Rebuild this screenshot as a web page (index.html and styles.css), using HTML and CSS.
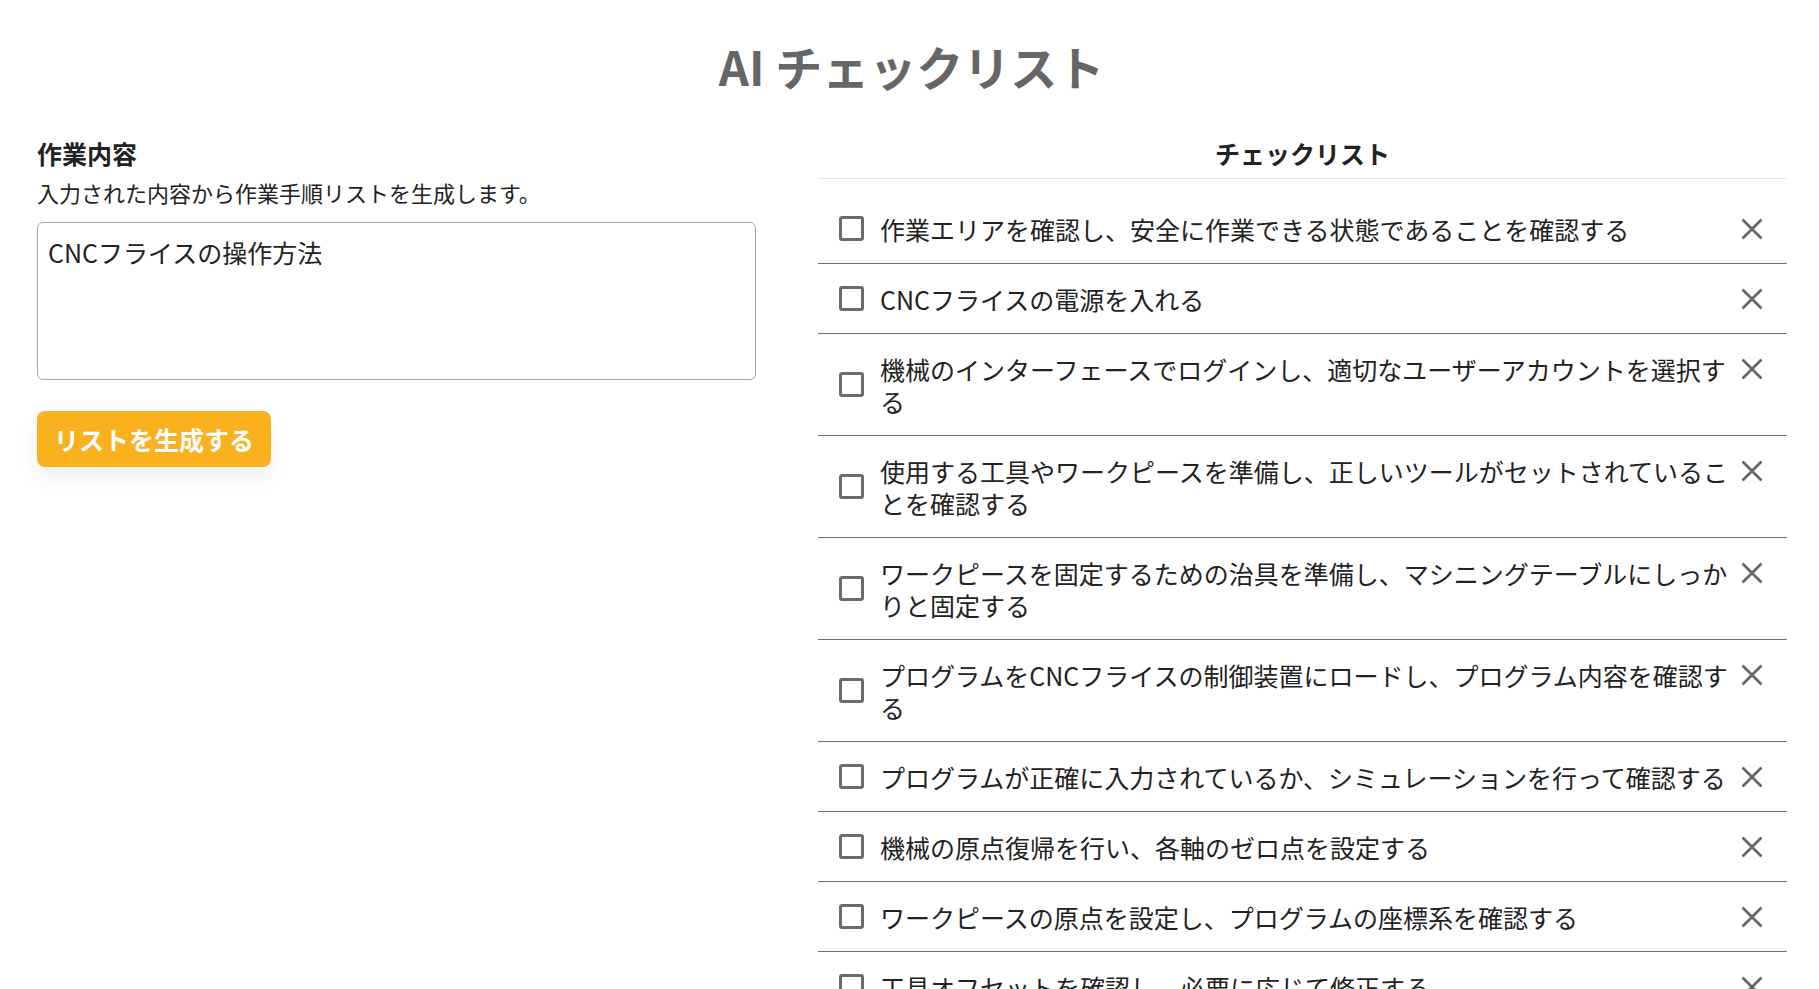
FILE: index.html
```html
<!DOCTYPE html>
<html lang="ja">
<head>
<meta charset="utf-8">
<title>AI チェックリスト</title>
<link rel="stylesheet" href="styles.css">
</head>
<body>
<h1 class="title">AI チェックリスト</h1>
<main class="layout">
  <section class="input-panel">
    <h2 class="panel-heading">作業内容</h2>
    <p class="panel-desc">入力された内容から作業手順リストを生成します。</p>
    <textarea class="task-input">CNCフライスの操作方法</textarea>
    <button class="generate-btn" type="button">リストを生成する</button>
  </section>
  <section class="list-panel">
    <h2 class="list-heading">チェックリスト</h2>
    <ul class="checklist">
      <li class="item"><span class="box"></span><span class="item-text">作業エリアを確認し、安全に作業できる状態であることを確認する</span><span class="remove"><svg viewBox="0 0 22 22" width="22" height="22"><path d="M1.5 1.5 L20.5 20.5 M20.5 1.5 L1.5 20.5"/></svg></span></li>
      <li class="item"><span class="box"></span><span class="item-text">CNCフライスの電源を入れる</span><span class="remove"><svg viewBox="0 0 22 22" width="22" height="22"><path d="M1.5 1.5 L20.5 20.5 M20.5 1.5 L1.5 20.5"/></svg></span></li>
      <li class="item"><span class="box"></span><span class="item-text">機械のインターフェースでログインし、適切なユーザーアカウントを選択する</span><span class="remove"><svg viewBox="0 0 22 22" width="22" height="22"><path d="M1.5 1.5 L20.5 20.5 M20.5 1.5 L1.5 20.5"/></svg></span></li>
      <li class="item"><span class="box"></span><span class="item-text">使用する工具やワークピースを準備し、正しいツールがセットされていることを確認する</span><span class="remove"><svg viewBox="0 0 22 22" width="22" height="22"><path d="M1.5 1.5 L20.5 20.5 M20.5 1.5 L1.5 20.5"/></svg></span></li>
      <li class="item"><span class="box"></span><span class="item-text">ワークピースを固定するための治具を準備し、マシニングテーブルにしっかりと固定する</span><span class="remove"><svg viewBox="0 0 22 22" width="22" height="22"><path d="M1.5 1.5 L20.5 20.5 M20.5 1.5 L1.5 20.5"/></svg></span></li>
      <li class="item"><span class="box"></span><span class="item-text">プログラムをCNCフライスの制御装置にロードし、プログラム内容を確認する</span><span class="remove"><svg viewBox="0 0 22 22" width="22" height="22"><path d="M1.5 1.5 L20.5 20.5 M20.5 1.5 L1.5 20.5"/></svg></span></li>
      <li class="item"><span class="box"></span><span class="item-text">プログラムが正確に入力されているか、シミュレーションを行って確認する</span><span class="remove"><svg viewBox="0 0 22 22" width="22" height="22"><path d="M1.5 1.5 L20.5 20.5 M20.5 1.5 L1.5 20.5"/></svg></span></li>
      <li class="item"><span class="box"></span><span class="item-text">機械の原点復帰を行い、各軸のゼロ点を設定する</span><span class="remove"><svg viewBox="0 0 22 22" width="22" height="22"><path d="M1.5 1.5 L20.5 20.5 M20.5 1.5 L1.5 20.5"/></svg></span></li>
      <li class="item"><span class="box"></span><span class="item-text">ワークピースの原点を設定し、プログラムの座標系を確認する</span><span class="remove"><svg viewBox="0 0 22 22" width="22" height="22"><path d="M1.5 1.5 L20.5 20.5 M20.5 1.5 L1.5 20.5"/></svg></span></li>
      <li class="item"><span class="box"></span><span class="item-text">工具オフセットを確認し、必要に応じて修正する</span><span class="remove"><svg viewBox="0 0 22 22" width="22" height="22"><path d="M1.5 1.5 L20.5 20.5 M20.5 1.5 L1.5 20.5"/></svg></span></li>
    </ul>
  </section>
</main>
</body>
</html>
```
FILE: styles.css
```css
* { box-sizing: border-box; }

html, body {
  margin: 0;
  padding: 0;
  background: #ffffff;
}

body {
  font-family: "Noto Sans CJK JP", "Noto Sans", sans-serif;
  color: #222222;
}

.title {
  margin: 38px 0 0;
  padding-left: 4px;
  text-align: center;
  font-size: 47px;
  line-height: 55px;
  font-weight: 700;
  color: #666666;
}

.layout {
  display: grid;
  grid-template-columns: 719px 1fr;
  column-gap: 62px;
  padding: 0 32px 0 37px;
  margin-top: 44px;
}

.panel-heading {
  margin: 0;
  font-size: 25px;
  line-height: 33px;
  font-weight: 700;
  color: #222222;
}

.panel-desc {
  margin: 7px 0 0;
  font-size: 22px;
  line-height: 30px;
  color: #222222;
}

.task-input {
  display: block;
  width: 100%;
  height: 158px;
  margin-top: 15px;
  padding: 13px 10px;
  border: 1px solid #a6a6a6;
  border-radius: 6px;
  font-family: inherit;
  font-size: 25px;
  line-height: 33px;
  color: #222222;
  resize: none;
  outline: none;
}

.generate-btn {
  display: block;
  margin-top: 31px;
  height: 56px;
  padding: 0 17px;
  border: none;
  border-radius: 8px;
  background: #f9b11e;
  color: #ffffff;
  font-family: inherit;
  font-size: 25px;
  line-height: 33px;
  font-weight: 700;
  box-shadow: 0 10px 22px rgba(0, 0, 0, 0.07);
}

.list-heading {
  margin: 0;
  padding-bottom: 8px;
  border-bottom: 1px solid #e6e6e6;
  text-align: center;
  font-size: 25px;
  line-height: 33px;
  font-weight: 700;
  color: #222222;
}

.checklist {
  list-style: none;
  margin: 15px 0 0;
  padding: 0;
}

.item {
  display: flex;
  align-items: center;
  padding: 18.5px 24px 18.5px 21px;
  border-bottom: 1px solid #6e6e6e;
}

.box {
  flex: none;
  width: 25px;
  height: 25px;
  border: 3px solid #6b6b6b;
  border-radius: 3px;
  margin-right: 16px;
}

.item-text {
  flex: 1;
  font-size: 25px;
  line-height: 32px;
  color: #222222;
}

.remove {
  flex: none;
  align-self: flex-start;
  display: flex;
  align-items: center;
  justify-content: center;
  width: 22px;
  height: 32px;
  margin-left: 4px;
}

.remove svg {
  display: block;
  stroke: #666666;
  stroke-width: 2.8;
  fill: none;
}
```
